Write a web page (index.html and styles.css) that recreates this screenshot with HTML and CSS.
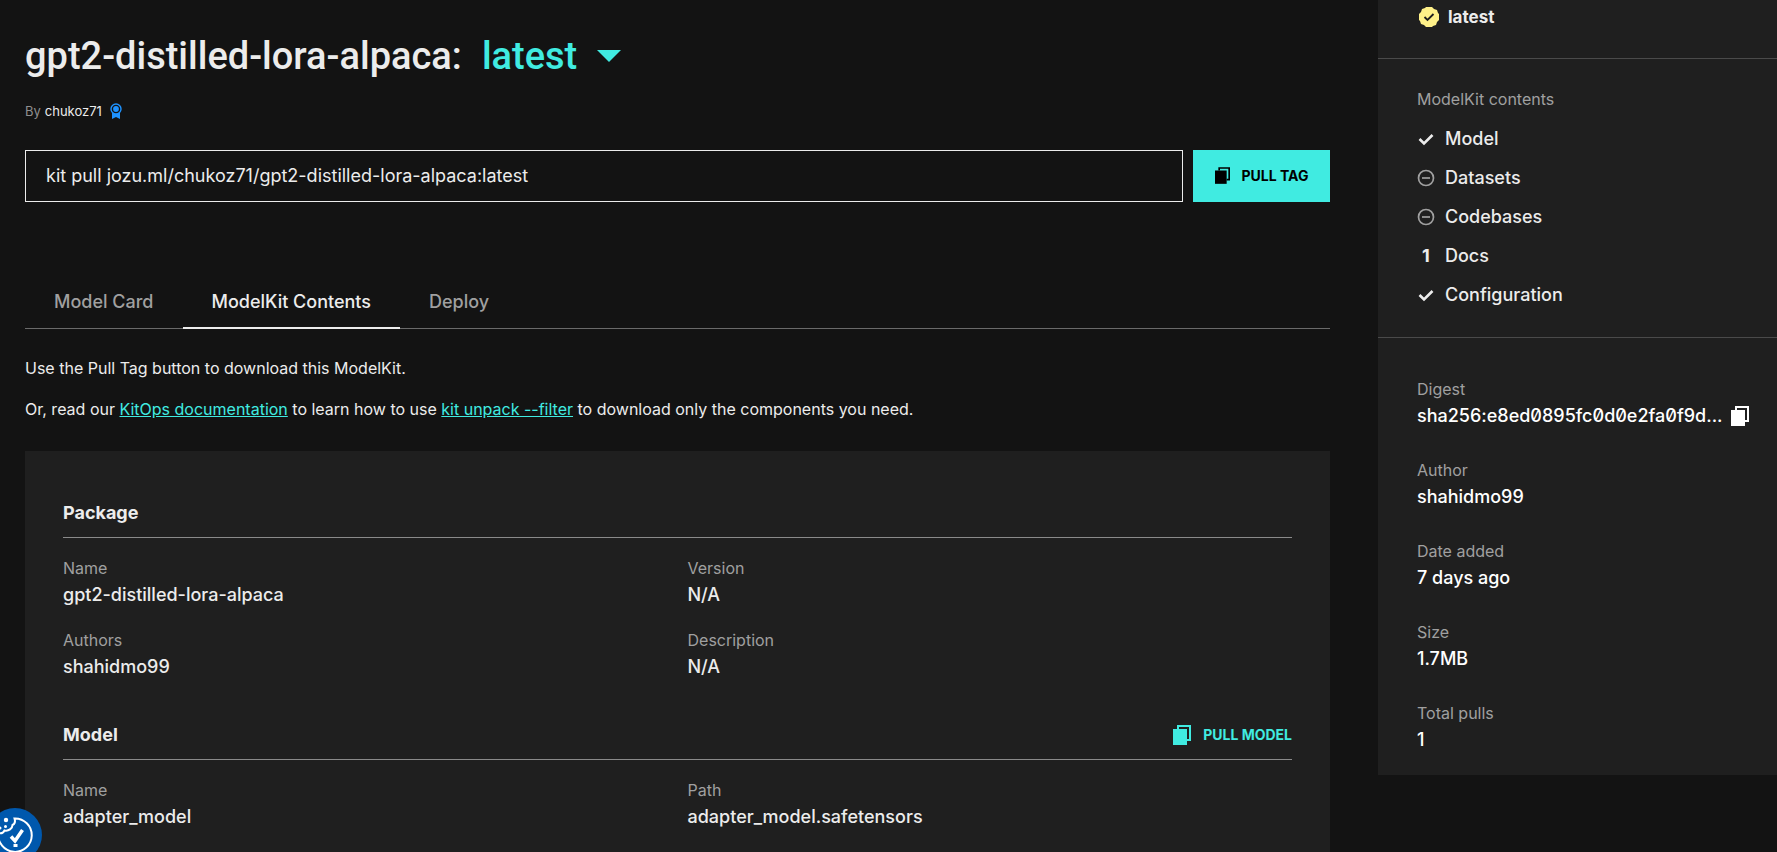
FILE: index.html
```html
<!DOCTYPE html>
<html lang="en">
<head>
<meta charset="utf-8">
<title>gpt2-distilled-lora-alpaca</title>
<link rel="stylesheet" href="styles.css">
</head>
<body>
<svg class="sprite" aria-hidden="true">
  <symbol id="copy" viewBox="0 0 18 20"><path fill="currentColor" d="M0 4h14v16H0z"/><path fill="none" stroke="currentColor" stroke-width="2" d="M5 4V1h12v14h-3"/></symbol>
  <symbol id="check" viewBox="0 0 18 18"><path fill="none" stroke="currentColor" stroke-width="2.600" d="M2.500 9l4.500 4.500L15.500 5"/></symbol>
  <symbol id="none" viewBox="0 0 18 18"><circle cx="9" cy="9" r="7.500" fill="none" stroke="currentColor" stroke-width="1.700"/><path stroke="currentColor" stroke-width="1.700" d="M5 9h8"/></symbol>
</svg>
<div class="page">
  <main class="main">
    <h1 class="title">
      <span>gpt2-distilled-lora-alpaca:</span>
      <button class="tag-select" type="button">latest
        <svg class="caret" viewBox="0 0 24 12" aria-hidden="true"><path fill="currentColor" d="M0 0h24L12 12z"/></svg>
      </button>
    </h1>
    <p class="byline"><span class="muted">By</span> <a class="owner" href="#">chukoz71</a>
      <svg class="ribbon" viewBox="0 0 12 16" aria-hidden="true"><path fill="#1f93ff" d="M2 9h8v7l-4-2-4 2z"/><circle cx="6" cy="6" r="5" fill="#131313" stroke="#1f93ff" stroke-width="1.400"/><circle cx="6" cy="6" r="2.900" fill="#1f93ff"/></svg>
    </p>
    <div class="pull">
      <input class="pull-command" type="text" readonly aria-label="Pull command" value="kit pull jozu.ml/chukoz71/gpt2-distilled-lora-alpaca:latest">
      <button class="pull-button" type="button"><svg class="copy-small" aria-hidden="true"><use href="#copy"/></svg>PULL TAG</button>
    </div>
    <nav class="tabs">
      <a class="tab" href="#">Model Card</a>
      <a class="tab tab-active" href="#">ModelKit Contents</a>
      <a class="tab" href="#">Deploy</a>
    </nav>
    <div class="intro">
      <p>Use the Pull Tag button to download this ModelKit.</p>
      <p>Or, read our <a href="#">KitOps documentation</a> to learn how to use <a href="#">kit unpack --filter</a> to download only the components you need.</p>
    </div>
    <div class="card">
      <section class="section">
        <div class="section-head"><h2>Package</h2></div>
        <dl class="fields">
          <div><dt>Name</dt><dd>gpt2-distilled-lora-alpaca</dd></div>
          <div><dt>Version</dt><dd>N/A</dd></div>
          <div><dt>Authors</dt><dd>shahidmo99</dd></div>
          <div><dt>Description</dt><dd>N/A</dd></div>
        </dl>
      </section>
      <section class="section">
        <div class="section-head"><h2>Model</h2><button class="pull-model" type="button"><svg class="copy" aria-hidden="true"><use href="#copy"/></svg>PULL MODEL</button></div>
        <dl class="fields">
          <div><dt>Name</dt><dd>adapter_model</dd></div>
          <div><dt>Path</dt><dd>adapter_model.safetensors</dd></div>
        </dl>
      </section>
    </div>
  </main>
  <aside class="side">
    <div class="side-tag">
      <svg class="seal" viewBox="0 0 20 20" aria-hidden="true"><path fill="#fff189" d="M7 0h6l2 2 3 1 1 3 1 1v6l-2 2-1 3-3 1-1 1H7l-2-2-3-1-1-3-1-1V7l2-2 1-3 3-1z"/><path fill="none" stroke="#1f1f1f" stroke-width="1.800" d="M5.500 10l3 3 6-6"/></svg>
      latest
    </div>
    <div class="side-contents">
      <h2 class="side-label">ModelKit contents</h2>
      <ul class="content-list">
        <li><svg class="mark" aria-hidden="true"><use href="#check"/></svg>Model</li>
        <li><svg class="mark mark-none" aria-hidden="true"><use href="#none"/></svg>Datasets</li>
        <li><svg class="mark mark-none" aria-hidden="true"><use href="#none"/></svg>Codebases</li>
        <li><b class="mark">1</b>Docs</li>
        <li><svg class="mark" aria-hidden="true"><use href="#check"/></svg>Configuration</li>
      </ul>
    </div>
    <dl class="details">
      <div><dt>Digest</dt><dd class="digest"><span class="digest-text">sha256:e8ed0895fc0d0e2fa0f9d...</span><button class="icon-button" type="button" aria-label="Copy digest"><svg class="copy" aria-hidden="true"><use href="#copy"/></svg></button></dd></div>
      <div><dt>Author</dt><dd>shahidmo99</dd></div>
      <div><dt>Date added</dt><dd>7 days ago</dd></div>
      <div><dt>Size</dt><dd>1.7MB</dd></div>
      <div><dt>Total pulls</dt><dd>1</dd></div>
    </dl>
  </aside>
</div>
<button class="consent" type="button" aria-label="Cookie settings">
  <svg viewBox="0 0 54 54" aria-hidden="true"><circle cx="27" cy="27" r="27" fill="#0058ad"/><g fill="none" stroke="#fff" stroke-width="2"><path d="M26.500 10.500A16.700 16.700 0 1 1 10.500 25c3 1 5-.5 6-2.500 4 1 8-2 8-5.500 2-1 3-3.500 2-6.500z"/></g><path fill="none" stroke="#fff" stroke-width="3.500" d="M23 28.500l4 4.500 7.500-11"/><g fill="#fff"><path d="M25.500 36h4v3h-4z"/><circle cx="18" cy="12" r="2.200"/><circle cx="17.500" cy="18.500" r="1.500"/><circle cx="12" cy="20" r="1.500"/></g></svg>
</button>
</body>
</html>
```
FILE: styles.css
```css
* { box-sizing: border-box; }
body { margin: 0; background: #131313; color: #ececec; font-family: Inter, "Liberation Sans", sans-serif; font-size: 18px; font-feature-settings: "zero"; }
h1, h2, p, dl, dd, ul { margin: 0; padding: 0; }
button { border: 0; background: none; padding: 0; color: inherit; font: inherit; cursor: pointer; }
.sprite { display: none; }
.page { display: grid; grid-template-columns: minmax(0, 1fr) 399px; min-height: 100vh; overflow: hidden; }
.main { display: flex; flex-direction: column; padding: 32px 48px 0 25px; }
.title { display: flex; gap: 20px; font-size: 38px; line-height: 48px; font-weight: 500; font-family: Roboto, sans-serif; }
.tag-select { display: flex; align-items: center; gap: 20px; color: #40ebe1; }
.caret { width: 24px; height: 12px; }
.byline { display: flex; align-items: center; gap: 4px; margin-top: 19px; font-size: 13px; line-height: 24px; }
.muted { color: #8f8f8f; }
.owner { color: inherit; text-decoration: none; }
.ribbon { width: 12px; height: 16px; margin-left: 4px; }
.pull { display: flex; gap: 10px; margin-top: 27px; }
.pull-command { flex: 1; min-width: 0; height: 52px; padding: 0 20px 2px; border: 1px solid #ececec; border-radius: 0; background: transparent; color: inherit; font: inherit; }
.pull-button { display: flex; align-items: center; justify-content: center; gap: 12px; width: 137px; padding-bottom: 2px; background: #40ebe1; color: #000; font-size: 14px; font-weight: 700; }
.copy-small { width: 15px; height: 17px; }
.copy { width: 18px; height: 20px; }
.tabs { display: flex; margin-top: 73px; border-bottom: 1px solid #6a6a6a; }
.tab { padding: 13px 29px 11px; margin-bottom: -1px; border-bottom: 2px solid transparent; color: #a0a0a0; line-height: 28px; font-weight: 500; text-decoration: none; }
.tab-active { color: #ececec; border-color: #ececec; }
.intro { margin-top: 27px; font-size: 16px; line-height: 25px; }
.intro p + p { margin-top: 16px; }
.intro a { color: #40ebe1; }
.card { flex: 1; margin-top: 29px; padding: 46px 38px 20px; background: #1f1f1f; }
.section + .section { margin-top: 38px; }
.section-head { display: flex; align-items: center; justify-content: space-between; height: 41px; padding-bottom: 9px; border-bottom: 1px solid #8a8a8a; }
.section h2 { font-size: 18px; line-height: 30px; font-weight: 700; }
.pull-model { display: flex; align-items: center; gap: 12px; color: #40ebe1; font-size: 14px; font-weight: 700; }
.fields { display: grid; grid-template-columns: 1fr 1fr; gap: 18px 20px; margin-top: 17px; }
dt { color: #a0a0a0; font-size: 16px; line-height: 26px; }
dd { line-height: 28px; font-weight: 500; }
.side { align-self: start; padding-bottom: 21px; background: #1f1f1f; }
.side-tag { display: flex; align-items: center; gap: 9px; padding: 5px 41px 29px; line-height: 24px; font-size: 17px; font-weight: 700; border-bottom: 1px solid #4a4a4a; }
.seal { width: 20px; height: 20px; }
.side-contents { padding: 28px 39px 23px; border-bottom: 1px solid #4a4a4a; }
.side-label { color: #a0a0a0; font-size: 16px; line-height: 24px; font-weight: 400; }
.content-list { margin-top: 8px; list-style: none; font-weight: 500; }
.content-list li { display: flex; align-items: center; gap: 10px; line-height: 39px; }
.mark { width: 18px; height: 18px; line-height: 18px; text-align: center; }
.mark-none { color: #a0a0a0; }
.details { display: grid; gap: 27px; padding: 38px 28px 0 39px; color: #fff; }
.digest { display: flex; align-items: center; justify-content: space-between; }
.digest-text { white-space: nowrap; }
.icon-button { display: flex; }
.consent { position: fixed; left: -12px; bottom: -10px; width: 54px; height: 54px; }
.consent svg { display: block; }
```
